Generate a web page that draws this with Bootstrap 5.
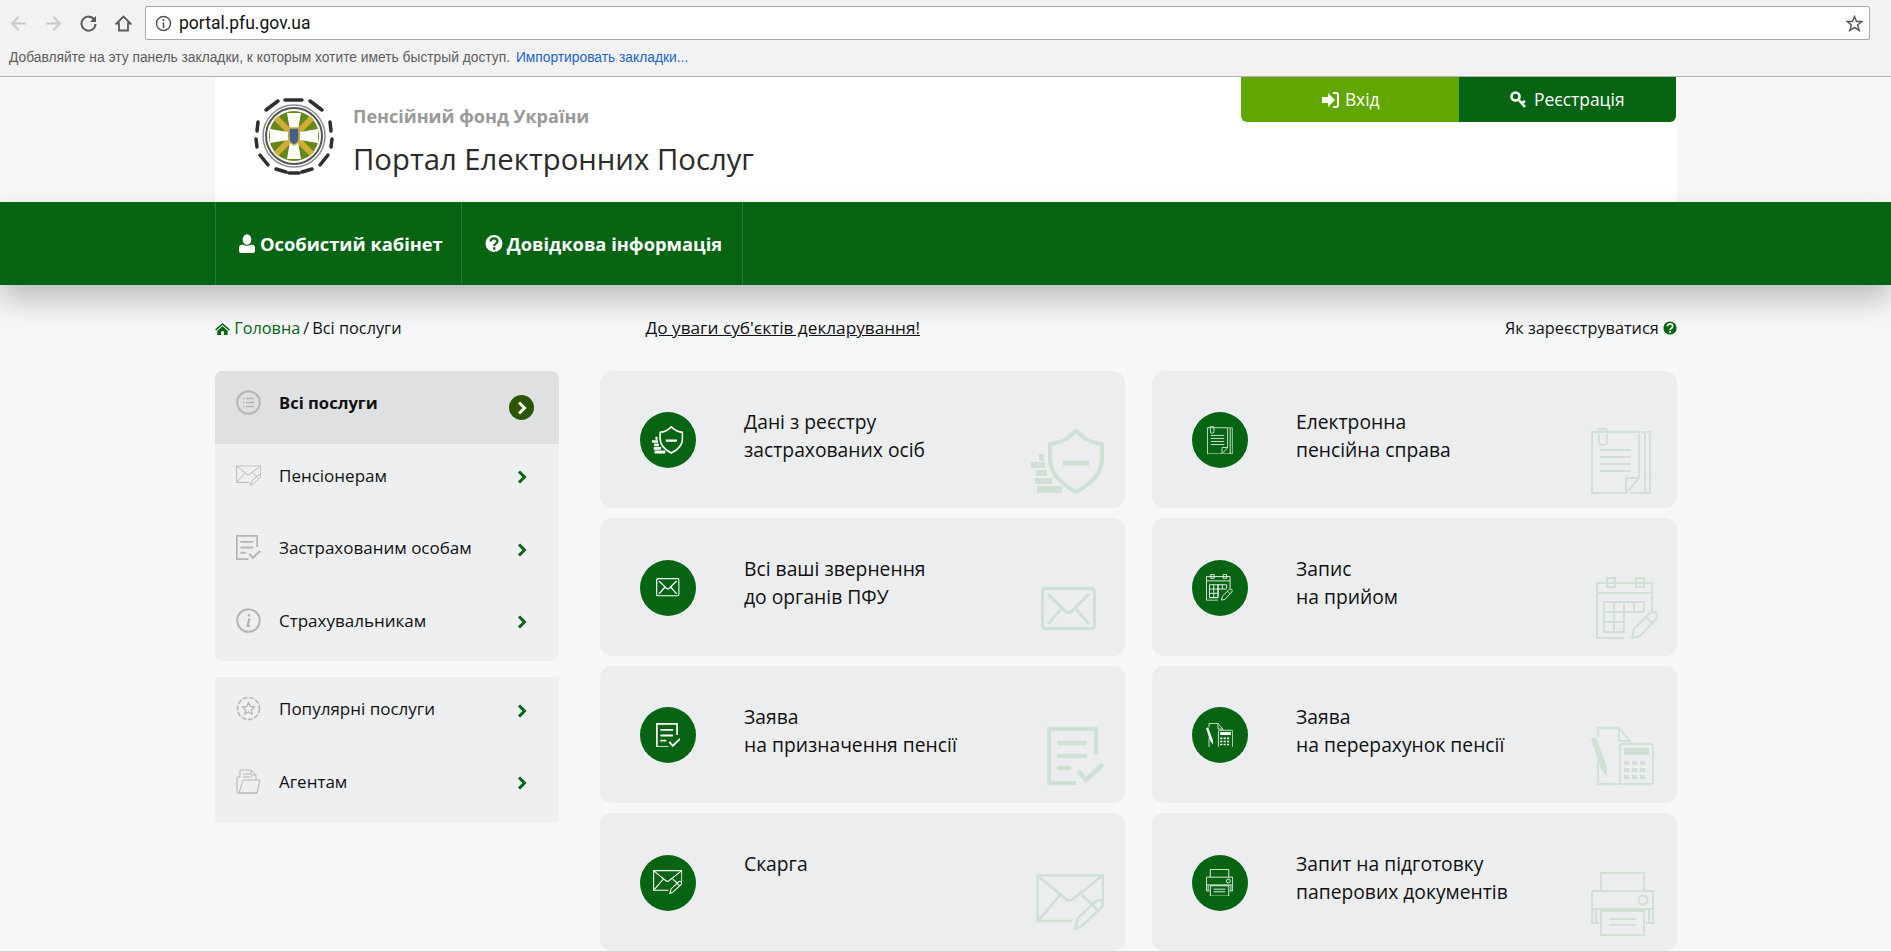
<!DOCTYPE html>
<html lang="uk">
<head>
    <title>Портал Електронних Послуг</title>
    <meta charset="utf-8">
    <meta name="viewport" content="width=device-width, initial-scale=1">
    <link href="https://cdn.jsdelivr.net/npm/bootstrap@5.3.3/dist/css/bootstrap.min.css" rel="stylesheet">
    <script src="https://cdn.jsdelivr.net/npm/bootstrap@5.3.3/dist/js/bootstrap.bundle.min.js"></script>
    <style>
        html, body { height: 100%; overflow: hidden; }
        body { background: #f6f7f9; font-family: "Open Sans", "Noto Sans", sans-serif; color: #111; height: 952px; border-bottom: 1px solid #d5d6d8; }

        /* browser chrome */
        .chrome-bar { background: #f2f2f2; height: 77px; border-bottom: 1px solid #b3b3b3; font-family: "Liberation Sans", sans-serif; }
        .chrome-tools { height: 42px; padding: 4px 21px 0 10px; }
        .chrome-btn { width: 17px; height: 17px; margin-right: 18px; color: #5a5a5a; }
        .chrome-btn.off { color: #c9c9c9; }
        .addr-box { height: 34px; margin-left: -5px; background: #fff; border: 1px solid #a9a9a9; border-radius: 2px; padding: 0 6px 0 9px; font-family: Roboto, sans-serif; font-size: 17.5px; color: #111; }
        .addr-box svg { width: 17px; height: 17px; color: #555; }
        .addr-text { margin-left: 7px; }
        .marks-row { font-size: 13.8px; color: #5c5c5c; padding: 8px 0 0 9px; line-height: 16px; }
        .marks-row a { color: #1c62cf; text-decoration: none; margin-left: 2px; }

        .page-wrap { width: 1462px; margin-left: 215px; }

        /* header */
        .head-box { background: #fff; height: 125px; }
        .logo-pic { width: 84px; height: 82px; margin: 18px 17px 0 37px; filter: blur(.4px); }
        .org-name { font-size: 18px; font-weight: 700; color: #999; line-height: 24px; padding-top: 27px; }
        .portal-name { font-size: 29.3px; color: #2b2b2b; line-height: 38px; margin-top: 12px; }
        .auth-group { width: 435px; height: 45px; margin-right: 1px; }
        .auth-btn { border: 0; border-radius: 0; color: #fff; font-size: 17.4px; display: flex; align-items: center; justify-content: center; gap: 6px; padding: 0; }
        .auth-btn:hover { color: #fff; }
        .auth-in { width: 218px; background: #62a700; border-bottom-left-radius: 6px; }
        .auth-reg { width: 217px; background: #066413; border-bottom-right-radius: 6px; }
        .auth-btn svg { width: 18px; height: 18px; }

        /* main green menu */
        .main-menu { background: #066413; height: 83px; box-shadow: 0 15px 30px rgba(0, 0, 0, .24); position: relative; }
        .main-menu .nav { height: 83px; border-left: 1px solid #2a7a35; }
        .main-menu .nav-link { color: #fff; font-size: 18.3px; font-weight: 700; height: 83px; padding: 0 18px 0 22px; border-right: 1px solid #2a7a35; display: flex; align-items: center; gap: 4px; }
        .main-menu .nav-item:last-child .nav-link { padding: 0 20px 0 23px; }
        .main-menu svg { width: 18px; height: 19px; }

        /* breadcrumb row */
        .crumb-row { height: 86px; font-size: 16.3px; padding-top: 33px; line-height: 20px; }
        .crumb-row .breadcrumb { margin: 0; --bs-breadcrumb-divider: "/"; --bs-breadcrumb-item-padding-x: 3px; --bs-breadcrumb-divider-color: #111; }
        .crumb-row .breadcrumb-item.active { color: #111; }
        .crumb-row a { color: #066413; text-decoration: none; }
        .crumb-row .breadcrumb svg { width: 15px; height: 15px; vertical-align: -2px; }
        .crumb-mid { flex: 1; padding-left: 244px; font-size: 17.2px; }
        .crumb-mid a { color: #111; text-decoration: underline; }
        .crumb-help svg { color: #066413; width: 14px; height: 14px; vertical-align: -1px; }

        /* left menu */
        .side-col { width: 344px; flex-shrink: 0; }
        .side-list { --bs-list-group-bg: #eeeff1; --bs-list-group-border-width: 0; --bs-list-group-border-radius: 7px; margin-bottom: 16px; }
        .side-list.flat { --bs-list-group-border-radius: 0; }
        .side-list .list-group-item { height: 72.5px; padding: 19px 0 0 21px; display: flex; font-size: 17px; line-height: 25px; color: #111; }
        .side-list .list-group-item.active { background: #dfe0e2; font-weight: 700; font-size: 16.6px; color: #111; }
        .side-ic { width: 25px; height: 25px; color: #b4b5b7; margin-right: 18px; flex-shrink: 0; }
        .side-arrow { width: 25px; height: 25px; margin: 2px 25px 0 auto; color: #066413; display: flex; align-items: center; justify-content: center; border-radius: 50%; flex-shrink: 0; }
        .side-arrow svg { width: 10px; height: 14px; }
        .active .side-arrow { background: #2b5600; color: #fff; margin-top: 5px; }

        /* cards */
        .tile-grid { display: grid; grid-template-columns: 525px 525px; grid-template-rows: 137px 138px 137px 138px; column-gap: 27px; row-gap: 10px; margin-left: 41px; }
        .tile-box { position: relative; background: #ecedef; border-radius: 12px; padding: 37px 0 0 144px; font-size: 19.3px; line-height: 28px; color: #111; }
        .round-ic { position: absolute; left: 40px; top: calc(50% - 27.5px); width: 56px; height: 56px; background: #066413; border-radius: 50%; display: flex; align-items: center; justify-content: center; color: #fff; }
        .round-ic svg { width: calc(var(--w) * .43); height: calc(var(--h) * .43); }
        .ghost-ic { position: absolute; right: var(--r); bottom: var(--b); width: var(--w); height: var(--h); color: #cfe0d5; }
        .i-shield { --w: 73px; --h: 65px; --r: 21px; --b: 14px; }
        .i-mail { --w: 55px; --h: 43px; --r: 29px; --b: 26px; }
        .i-doc { --w: 58px; --h: 58px; --r: 20px; --b: 18px; }
        .i-mailpen { --w: 68px; --h: 56px; --r: 21px; --b: 21px; }
        .i-file { --w: 60px; --h: 66px; --r: 26px; --b: 14px; }
        .i-cal { --w: 63px; --h: 62px; --r: 18px; --b: 17px; }
        .i-calc { --w: 63px; --h: 58px; --r: 23px; --b: 18px; }
        .i-print { --w: 63px; --h: 64px; --r: 23px; --b: 15px; }
    </style>
</head>
<body>

<!-- icon set -->
<svg width="0" height="0" class="d-block position-absolute">
    <symbol id="s-shield" viewBox="0 0 73 65">
        <path d="M45 2 L52 8 Q58 13 71 15 V30 C71 46 58 56 45 63 C32 56 19 46 19 30 V15 Q32 13 38 8 Z" fill="none" stroke="currentColor" stroke-width="4"/>
        <path d="M32 34 H58" stroke="currentColor" stroke-width="5"/>
        <path d="M8 25h5v7H8zM0 33h14v6H0zM5 41h11v6H5zM4 49h17v6H4zM6 57h25v7H6z" fill="currentColor"/>
    </symbol>
    <symbol id="s-mail" viewBox="0 0 55 43">
        <rect x="1.5" y="1.5" width="52" height="40" rx="3" fill="none" stroke="currentColor" stroke-width="3"/>
        <path d="M7 7 L24 24 Q27.500 27 31 24 L48 7 M7 37 L20 22 M48 37 L35 22" fill="none" stroke="currentColor" stroke-width="3"/>
    </symbol>
    <symbol id="s-doc" viewBox="0 0 58 58">
        <path d="M49 28 V2 H2 V56 H29" fill="none" stroke="currentColor" stroke-width="4"/>
        <path d="M12 16 H38 M12 29 H38 M12 41 H22" stroke="currentColor" stroke-width="4.500" stroke-linecap="round"/>
        <path d="M31 44 L39 53 L56 37" fill="none" stroke="currentColor" stroke-width="4.500"/>
    </symbol>
    <symbol id="s-mailpen" viewBox="0 0 68 56">
        <path d="M36 47 H1.500 V1.500 H67 V30" fill="none" stroke="currentColor" stroke-width="2.500"/>
        <path d="M2 2 L30 25 Q33 28 37 25 L66 2 M2 47 L24 21 M46 21 L58 32" fill="none" stroke="currentColor" stroke-width="2.500"/>
        <path d="M39 55 L42 44 L60 27 Q63 25 66 28 Q68 31 65 34 L47 51 Z M56 31 L62 37" fill="none" stroke="currentColor" stroke-width="2.500"/>
    </symbol>
    <symbol id="s-file" viewBox="0 0 60 66">
        <path d="M48 4 H1 V65 H35 L48 50 Z M35 65 V50 H48 M50 4 H54 V65 H39 M56 4 H59 V65 H53" fill="none" stroke="currentColor" stroke-width="1.800"/>
        <path d="M9 22 H40 M9 29 H40 M9 36 H40 M9 43 H40" stroke="currentColor" stroke-width="1.800"/>
        <path d="M7 6 V2.500 Q7 1 10 1 H13 Q16 1 16 3 V14 Q16 17 12 17 Q8 17 8 14 V7" fill="none" stroke="currentColor" stroke-width="1.800"/>
    </symbol>
    <symbol id="s-cal" viewBox="0 0 63 62">
        <path d="M28 61 H1 V6 H56 V34 M1 16 H56" fill="none" stroke="currentColor" stroke-width="2"/>
        <path d="M11 1h8v9h-8zM40 1h8v9h-8z" fill="none" stroke="currentColor" stroke-width="2"/>
        <path d="M8 55 H28 V25 H48 V34 M8 25 H28 V55 H8 Z M8 35 H48 M8 45 H28 M18 25 V55 M38 25 V35" fill="none" stroke="currentColor" stroke-width="2"/>
        <path d="M36 61 L38 52 L54 36 Q57 34 60 36 Q62 39 60 42 L44 59 Z M50 40 L56 46" fill="none" stroke="currentColor" stroke-width="2"/>
    </symbol>
    <symbol id="s-calc" viewBox="0 0 63 58">
        <path d="M29 57 H7 V34 M7 10 V1 H28 L39 14 V17 M28 1 V14 H39" fill="none" stroke="currentColor" stroke-width="1.800"/>
        <path d="M0 12 L5 10 L16 40 L16 50 L10 42 Z" fill="currentColor"/>
        <rect x="29" y="17" width="33" height="40" rx="2" fill="none" stroke="currentColor" stroke-width="1.800"/>
        <rect x="33" y="21" width="25" height="7" fill="currentColor"/>
        <path d="M33 34h5v4h-5zM41 34h5v4h-5zM49 34h5v4h-5zM33 41h5v4h-5zM41 41h5v4h-5zM49 41h5v4h-5zM33 48h5v4h-5zM41 48h5v4h-5zM49 48h5v4h-5z" fill="currentColor"/>
    </symbol>
    <symbol id="s-print" viewBox="0 0 63 64">
        <path d="M10 19 V1 H53 V19 M1 19 H62 V51 H55 M8 51 H1 V19 M1 37 H62 M5 38 V50 M58 38 V50" fill="none" stroke="currentColor" stroke-width="2"/>
        <rect x="10" y="39" width="43" height="24" fill="none" stroke="currentColor" stroke-width="2"/>
        <circle cx="52" cy="28" r="4.500" fill="none" stroke="currentColor" stroke-width="2"/>
        <path d="M18 47 H45 M18 53 H45" stroke="currentColor" stroke-width="2"/>
    </symbol>
    <symbol id="s-chev" viewBox="0 0 10 14">
        <path d="M2 1.500 L7.500 7 L2 12.500" fill="none" stroke="currentColor" stroke-width="3"/>
    </symbol>
</svg>

<div class="chrome-bar">
    <div class="chrome-tools d-flex align-items-center">
        <svg class="chrome-btn off" viewBox="0 0 17 17"><path d="M16 8.500H2M8.500 2L2 8.500L8.500 15" fill="none" stroke="currentColor" stroke-width="2"/></svg>
        <svg class="chrome-btn off" viewBox="0 0 17 17"><path d="M1 8.500H15M8.500 2L15 8.500L8.500 15" fill="none" stroke="currentColor" stroke-width="2"/></svg>
        <svg class="chrome-btn" viewBox="0 0 17 17"><path d="M14.500 5A7 7 0 1 0 15.500 9" fill="none" stroke="currentColor" stroke-width="2"/><path d="M16 1V7H10Z" fill="currentColor"/></svg>
        <svg class="chrome-btn" viewBox="0 0 17 17"><path d="M8.500 1.500L1.500 8.500H4V15.500H13V8.500H15.500Z" fill="none" stroke="currentColor" stroke-width="1.800"/></svg>
        <div class="addr-box flex-grow-1 d-flex align-items-center">
            <svg viewBox="0 0 17 17"><circle cx="8.500" cy="8.500" r="7" fill="none" stroke="currentColor" stroke-width="1.500"/><path d="M8.500 7.500V13M8.500 4V6" stroke="currentColor" stroke-width="1.600"/></svg>
            <span class="addr-text">portal.pfu.gov.ua</span>
            <svg class="ms-auto" viewBox="0 0 17 17"><path d="M8.500 1.500L10.500 6.500H16L11.600 10L13.200 15.500L8.500 12.300L3.800 15.500L5.400 10L1 6.500H6.500Z" fill="none" stroke="currentColor" stroke-width="1.400"/></svg>
        </div>
    </div>
    <div class="marks-row">Добавляйте на эту панель закладки, к которым хотите иметь быстрый доступ. <a href="#">Импортировать закладки...</a></div>
</div>

<div class="page-wrap head-box d-flex justify-content-between">
    <div class="d-flex">
        <svg class="logo-pic" viewBox="0 0 84 82">
            <!-- outer broken ring -->
            <path d="M33 5H50M14 15L26 6M58 6L70 15M6 27L5 36M78 27L79 36M4 44L5 52M80 44L79 52M8 60L16 70M76 60L68 70M24 74L34 77M60 74L50 77M37 78H47" fill="none" stroke="#2e2e2e" stroke-width="3.500" stroke-linecap="round"/>
            <circle cx="42" cy="41" r="31" fill="none" stroke="#8b8b8b" stroke-width="1.500"/>
            <circle cx="42" cy="41" r="28" fill="none" stroke="#555" stroke-width="2"/>
            <circle cx="42" cy="41" r="25" fill="#66881a"/>
            <path d="M24 23L60 59M60 23L24 59" stroke="#cfae38" stroke-width="6"/>
            <!-- white petals -->
            <path d="M35 18H49L46 35H38ZM35 64H49L46 47H38ZM18 34V48L36 45V37ZM66 34V48L48 45V37Z" fill="#fff"/>
            <path d="M37 33h10v11q0 4-5 6q-5-2-5-6Z" fill="#44608a" stroke="#c9b04a" stroke-width="1.500"/>
        </svg>
        <div>
            <div class="org-name">Пенсійний фонд України</div>
            <div class="portal-name">Портал Електронних Послуг</div>
        </div>
    </div>
    <div class="btn-group auth-group">
        <a class="btn auth-btn auth-in" href="#">
            <svg viewBox="0 0 18 18"><path d="M1 6H7V2L14 9L7 16V12H1Z" fill="currentColor"/><path d="M12 2H15Q17 2 17 4V14Q17 16 15 16H12" fill="none" stroke="currentColor" stroke-width="2"/></svg>
            Вхід</a>
        <a class="btn auth-btn auth-reg" href="#">
            <svg viewBox="0 0 18 18"><circle cx="5.500" cy="5.500" r="4" fill="none" stroke="currentColor" stroke-width="2.600"/><path d="M8 8L15 16M12 12L15 10" stroke="currentColor" stroke-width="2.600"/></svg>
            Реєстрація</a>
    </div>
</div>

<div class="main-menu">
    <div class="page-wrap">
        <ul class="nav">
            <li class="nav-item"><a class="nav-link" href="#">
                <svg viewBox="0 0 18 19"><ellipse cx="9" cy="5.500" rx="4.300" ry="5.300" fill="currentColor"/><path d="M1 17V13.500Q1 11 4.500 10.500Q9 13 13.500 10.500Q17 11 17 13.500V17Q17 19 15 19H3Q1 19 1 17Z" fill="currentColor"/></svg>
                Особистий кабінет</a></li>
            <li class="nav-item"><a class="nav-link" href="#">
                <svg viewBox="0 0 18 19"><circle cx="9" cy="9.500" r="8.500" fill="currentColor"/><path d="M5.500 7.500Q6 4.300 9 4.300Q12.500 4.300 12.500 7.300Q12.500 9 10.500 10Q9.200 10.700 9.200 12" fill="none" stroke="#066413" stroke-width="2.200"/><rect x="8" y="13.200" width="2.400" height="2.400" fill="#066413"/></svg>
                Довідкова інформація</a></li>
        </ul>
    </div>
</div>

<div class="page-wrap crumb-row d-flex">
    <ol class="breadcrumb">
        <li class="breadcrumb-item"><a href="#"><svg viewBox="0 0 16 16"><path d="M8 2L0 9L1.200 10.200L8 4.300L14.800 10.200L16 9ZM8 5.500L2.500 10.300V15H6.500V11H9.500V15H13.500V10.300Z" fill="currentColor"/></svg> Головна</a></li>
        <li class="breadcrumb-item active">Всі послуги</li>
    </ol>
    <div class="crumb-mid"><a href="#">До уваги суб'єктів декларування!</a></div>
    <div class="crumb-help">Як зареєструватися <svg viewBox="0 0 18 18"><circle cx="9" cy="9" r="8.500" fill="currentColor"/><path d="M5.500 7Q6 3.800 9 3.800Q12.500 3.800 12.500 6.800Q12.500 8.500 10.500 9.500Q9.200 10.200 9.200 11.500" fill="none" stroke="#f6f7f9" stroke-width="2.200"/><rect x="8" y="12.700" width="2.400" height="2.400" fill="#f6f7f9"/></svg></div>
</div>

<div class="page-wrap d-flex">
    <div class="side-col">
        <div class="list-group side-list">
            <a class="list-group-item active" href="#">
                <svg class="side-ic" viewBox="0 0 25 25"><circle cx="12.500" cy="12.500" r="11.300" fill="none" stroke="currentColor" stroke-width="2"/><path d="M10 8.500H18M10 12.500H18M10 16.500H18M7 8.500H8.500M7 12.500H8.500M7 16.500H8.500" stroke="currentColor" stroke-width="1.300"/></svg>
                Всі послуги
                <span class="side-arrow"><svg><use href="#s-chev"/></svg></span></a>
            <a class="list-group-item" href="#">
                <svg class="side-ic" viewBox="0 0 68 56"><use href="#s-mailpen"/></svg>
                Пенсіонерам
                <span class="side-arrow"><svg><use href="#s-chev"/></svg></span></a>
            <a class="list-group-item" href="#">
                <svg class="side-ic" viewBox="0 0 58 58"><use href="#s-doc"/></svg>
                Застрахованим особам
                <span class="side-arrow"><svg><use href="#s-chev"/></svg></span></a>
            <a class="list-group-item" href="#">
                <svg class="side-ic" viewBox="0 0 25 25"><circle cx="12.500" cy="12.500" r="11.300" fill="none" stroke="currentColor" stroke-width="2"/><path d="M13.500 10.500L11.500 18H14M13 6V8.500" fill="none" stroke="currentColor" stroke-width="2.200"/></svg>
                Страхувальникам
                <span class="side-arrow"><svg><use href="#s-chev"/></svg></span></a>
        </div>
        <div class="list-group side-list flat">
            <a class="list-group-item" href="#">
                <svg class="side-ic" viewBox="0 0 25 25"><circle cx="12.500" cy="12.500" r="11" fill="none" stroke="currentColor" stroke-width="1.600" stroke-dasharray="5 1.500"/><path d="M12.500 6.500L14.300 10.500L18.500 11L15.400 13.900L16.200 18L12.500 16L8.800 18L9.600 13.900L6.500 11L10.700 10.500Z" fill="none" stroke="currentColor" stroke-width="1.300"/></svg>
                Популярні послуги
                <span class="side-arrow"><svg><use href="#s-chev"/></svg></span></a>
            <a class="list-group-item" href="#">
                <svg class="side-ic" viewBox="0 0 25 25"><path d="M1 8H4V1H15L20 6V11M24 11H7L3 24H21Z M1 8V24H21M15 1V6H20M7 5H14M7 8H16" fill="none" stroke="currentColor" stroke-width="1"/></svg>
                Агентам
                <span class="side-arrow"><svg><use href="#s-chev"/></svg></span></a>
        </div>
    </div>

    <div class="tile-grid">
        <div class="tile-box i-shield">
            <span class="round-ic"><svg><use href="#s-shield"/></svg></span>
            Дані з реєстру<br>застрахованих осіб
            <svg class="ghost-ic"><use href="#s-shield"/></svg>
        </div>
        <div class="tile-box i-file">
            <span class="round-ic"><svg><use href="#s-file"/></svg></span>
            Електронна<br>пенсійна справа
            <svg class="ghost-ic"><use href="#s-file"/></svg>
        </div>
        <div class="tile-box i-mail">
            <span class="round-ic"><svg><use href="#s-mail"/></svg></span>
            Всі ваші звернення<br>до органів ПФУ
            <svg class="ghost-ic"><use href="#s-mail"/></svg>
        </div>
        <div class="tile-box i-cal">
            <span class="round-ic"><svg><use href="#s-cal"/></svg></span>
            Запис<br>на прийом
            <svg class="ghost-ic"><use href="#s-cal"/></svg>
        </div>
        <div class="tile-box i-doc">
            <span class="round-ic"><svg><use href="#s-doc"/></svg></span>
            Заява<br>на призначення пенсії
            <svg class="ghost-ic"><use href="#s-doc"/></svg>
        </div>
        <div class="tile-box i-calc">
            <span class="round-ic"><svg><use href="#s-calc"/></svg></span>
            Заява<br>на перерахунок пенсії
            <svg class="ghost-ic"><use href="#s-calc"/></svg>
        </div>
        <div class="tile-box i-mailpen">
            <span class="round-ic"><svg><use href="#s-mailpen"/></svg></span>
            Скарга
            <svg class="ghost-ic"><use href="#s-mailpen"/></svg>
        </div>
        <div class="tile-box i-print">
            <span class="round-ic"><svg><use href="#s-print"/></svg></span>
            Запит на підготовку<br>паперових документів
            <svg class="ghost-ic"><use href="#s-print"/></svg>
        </div>
    </div>
</div>

</body>
</html>
